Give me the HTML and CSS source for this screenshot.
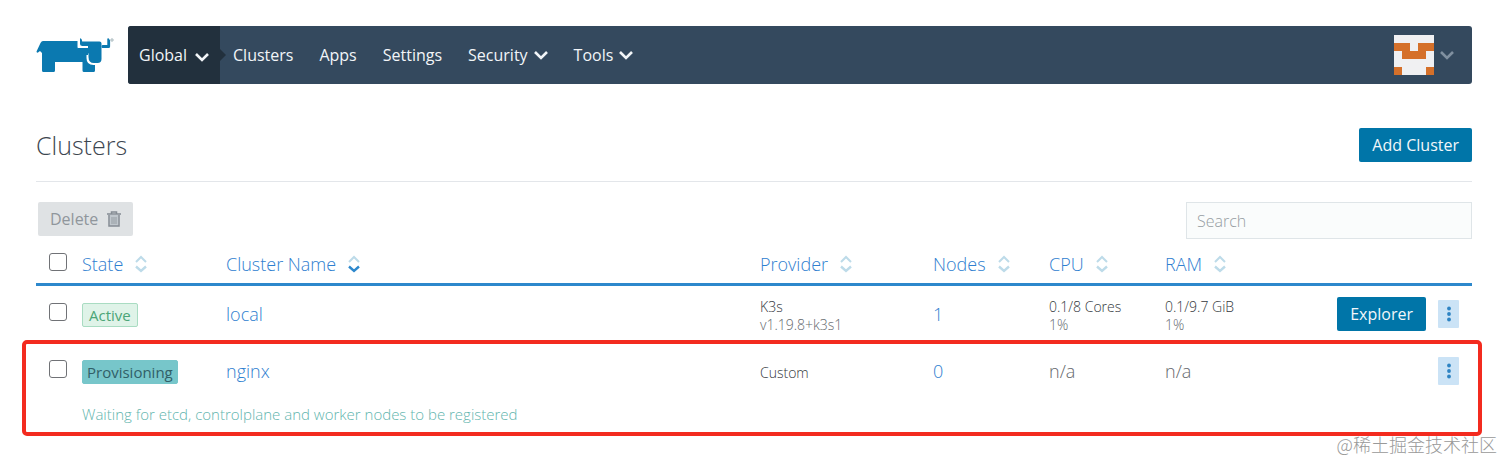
FILE: index.html
```html
<!DOCTYPE html>
<html lang="en">
<head>
  <meta charset="UTF-8">
  <meta name="viewport" content="width=device-width, initial-scale=1.0">
  <title>Clusters</title>
  <link rel="stylesheet" href="styles.css">
</head>
<body>

<svg class="sprite" aria-hidden="true">
  <symbol id="chevron" viewBox="0 0 14 10">
    <path d="M1 2L7 8 13 2" fill="none" stroke="currentColor" stroke-width="2.600"/>
  </symbol>
  <symbol id="sort" viewBox="0 0 12 18">
    <path d="M1 7l5-5 5 5" fill="none" stroke="#bddbe9" stroke-width="2"/>
    <path d="M1 11.500l5 4.500 5-4.500" fill="none" stroke="currentColor" stroke-width="2.400"/>
  </symbol>
  <symbol id="dots" viewBox="0 0 4 16">
    <circle cx="2" cy="2.500" r="1.900"/>
    <circle cx="2" cy="8" r="1.900"/>
    <circle cx="2" cy="13.500" r="1.900"/>
  </symbol>
</svg>

<header class="header">
  <a href="#" class="logo" aria-label="Home">
    <svg viewBox="0 0 78 36" width="78" height="36">
      <g fill="#0b79b0">
        <path d="M7 3h34.500v6q0 1.500 1.500 1.500h8q1 0 1-1V8h-5.500q-2.500 0-2.500-2V1q0-1 .8-.6.7.2.9 1.200l.5 1.900h17.300q2 0 2 2v15.500q0 4-4 4H58q-5.500 0-5.500-6v-3q0-1-1-1t-1 1v4q0 7 7 7h1.500v5.500q0 1.500-1.500 1.500H48q-1.500 0-1.500-1.500V24H19v8.500q0 1.500-1.500 1.500h-10Q6 34 6 32.500V15l-2-2-2 1.500q-1.500.5-1.500-1L4.500 5Q5.500 3 7 3z"/>
        <path d="M42 10h10v7H42z"/>
        <path d="M66.500 7h4.800V.8q.4-1 1.500-.3l1.300 1.900v6q0 1.600-1.500 1.600h-6.100q-1 0-1-1.500t1-1.500z"/>
      </g>
      <path d="M43 2v6q0 1.200 1.200 1.200H52" fill="none" stroke="#fff" stroke-width="1.600"/>
      <circle cx="76" cy="2" r="1.200" fill="none" stroke="#7f979d" stroke-width="0.700"/>
    </svg>
  </a>
  <nav class="nav">
    <button type="button" class="nav-item scope">Global <svg class="chevron"><use href="#chevron"/></svg></button>
    <a href="#" class="nav-item">Clusters</a>
    <a href="#" class="nav-item">Apps</a>
    <a href="#" class="nav-item">Settings</a>
    <button type="button" class="nav-item">Security <svg class="chevron"><use href="#chevron"/></svg></button>
    <button type="button" class="nav-item">Tools <svg class="chevron"><use href="#chevron"/></svg></button>
    <button type="button" class="nav-item user" aria-label="User menu">
      <svg class="avatar" viewBox="0 0 40 40" shape-rendering="crispEdges">
        <path fill="#f0f0f2" d="M0 0h40v40H0z"/>
        <path fill="#d5702a" d="M0 8h16v8h8V8h16v8h-8v8H8v-8H0zM0 32h8v8H0zM32 32h8v8h-8z"/>
      </svg>
      <svg class="chevron"><use href="#chevron"/></svg>
    </button>
  </nav>
</header>

<main class="content">
  <div class="title-bar">
    <h1>Clusters</h1>
    <button type="button" class="btn">Add Cluster</button>
  </div>

  <div class="toolbar">
    <button type="button" class="btn btn-delete" disabled>Delete
      <svg viewBox="0 0 14 16" width="14" height="16">
        <path fill="#c0c7cd" d="M2.500 4h9v11h-9z"/>
        <path d="M0 3h14M4.500 3V1h5v2M2 4v11h10V4" fill="none" stroke="#858c94" stroke-width="1.500"/>
        <path d="M5 6v7M7 6v7M9 6v7" fill="none" stroke="#858c94" stroke-width="0.700"/>
      </svg>
    </button>
    <input type="search" class="search" placeholder="Search" aria-label="Search">
  </div>

  <table class="clusters">
    <colgroup>
      <col class="col-check">
      <col class="col-state">
      <col class="col-name">
      <col class="col-provider">
      <col class="col-nodes">
      <col class="col-cpu">
      <col class="col-ram">
      <col class="col-actions">
    </colgroup>
    <thead>
      <tr>
        <th class="check"><input type="checkbox" aria-label="Select all"></th>
        <th><a href="#">State <svg class="sort"><use href="#sort"/></svg></a></th>
        <th><a href="#">Cluster Name <svg class="sort sorted"><use href="#sort"/></svg></a></th>
        <th><a href="#">Provider <svg class="sort"><use href="#sort"/></svg></a></th>
        <th><a href="#">Nodes <svg class="sort"><use href="#sort"/></svg></a></th>
        <th><a href="#">CPU <svg class="sort"><use href="#sort"/></svg></a></th>
        <th><a href="#">RAM <svg class="sort"><use href="#sort"/></svg></a></th>
        <th></th>
      </tr>
    </thead>
    <tbody>
      <tr class="row">
        <td class="check"><input type="checkbox" aria-label="Select local"></td>
        <td><span class="badge active">Active</span></td>
        <td><a href="#">local</a></td>
        <td class="small">K3s<div class="muted">v1.19.8+k3s1</div></td>
        <td><a href="#">1</a></td>
        <td class="small">0.1/8 Cores<div class="muted">1%</div></td>
        <td class="small">0.1/9.7 GiB<div class="muted">1%</div></td>
        <td>
          <div class="actions">
            <button type="button" class="btn">Explorer</button>
            <button type="button" class="more" aria-label="Actions for local"><svg><use href="#dots"/></svg></button>
          </div>
        </td>
      </tr>
    </tbody>
    <tbody class="highlight">
      <tr class="row">
        <td class="check"><input type="checkbox" aria-label="Select nginx"></td>
        <td><span class="badge provisioning">Provisioning</span></td>
        <td><a href="#">nginx</a></td>
        <td class="small">Custom</td>
        <td><a href="#">0</a></td>
        <td class="muted">n/a</td>
        <td class="muted">n/a</td>
        <td>
          <div class="actions">
            <button type="button" class="more" aria-label="Actions for nginx"><svg><use href="#dots"/></svg></button>
          </div>
        </td>
      </tr>
      <tr class="message">
        <td></td>
        <td colspan="7">Waiting for etcd, controlplane and worker nodes to be registered</td>
      </tr>
    </tbody>
  </table>
</main>

<div class="watermark" lang="zh-CN">@稀土掘金技术社区</div>

</body>
</html>
```
FILE: styles.css
```css
* {
  box-sizing: border-box;
}

body {
  position: relative;
  margin: 0;
  padding: 26px 40px 32px 36px;
  min-height: 100vh;
  background-color: #fff;
  color: #33373c;
  font-family: "Open Sans", "Noto Sans", sans-serif;
  font-size: 16px;
  font-weight: 300;
}

a {
  color: #2f80d0;
  text-decoration: none;
}

button,
input {
  font-family: inherit;
  font-weight: inherit;
}

.sprite {
  position: absolute;
  width: 0;
  height: 0;
}

/* Header */
.header {
  display: flex;
  height: 58px;
}

.logo {
  width: 92px;
  padding-top: 12px;
}

.nav {
  flex: 1;
  display: flex;
  background-color: #34495e;
  border-radius: 3px;
}

.nav-item {
  display: flex;
  align-items: center;
  gap: 6px;
  padding: 0 13px;
  border: none;
  background: none;
  color: #f2f5f8;
  font-size: 16px;
  font-weight: 400;
  cursor: pointer;
}

.chevron {
  width: 14px;
  height: 10px;
}

.scope {
  position: relative;
  gap: 8px;
  padding: 0 11px;
  background-color: #22303d;
  border-radius: 3px 0 0 3px;
}

.scope .chevron {
  margin-top: 4px;
}

.scope::after {
  content: "";
  position: absolute;
  left: 100%;
  top: 23px;
  border: 6px solid transparent;
  border-left-color: #22303d;
  border-right: none;
}

.user {
  margin-left: auto;
  padding: 0 18px;
}

.user .chevron {
  color: #8090a0;
}

.avatar {
  width: 40px;
  height: 40px;
}

/* Title */
.title-bar {
  display: flex;
  justify-content: space-between;
  align-items: center;
  padding: 44px 0 19px;
  border-bottom: 1px solid #e3e6ea;
}

h1 {
  margin: 0;
  color: #3d4650;
  font-size: 25px;
  font-weight: 300;
  line-height: 34px;
}

.btn {
  height: 34px;
  padding: 0 13px;
  border: none;
  border-radius: 2px;
  background-color: #0075a8;
  color: #f2f7fa;
  font-size: 16px;
  font-weight: 400;
  cursor: pointer;
}

/* Toolbar */
.toolbar {
  display: flex;
  justify-content: space-between;
  align-items: flex-start;
  padding: 20px 0 6px 2px;
}

.btn-delete {
  display: flex;
  align-items: center;
  gap: 9px;
  padding: 0 12px;
  background-color: #dfe2e4;
  color: #90969c;
  cursor: default;
}

.search {
  width: 286px;
  height: 37px;
  padding: 0 10px;
  border: 1px solid #dfe5e8;
  background-color: #fafcfc;
  font-size: 16px;
  outline: none;
}

.search::placeholder {
  color: #969ca2;
}

/* Table */
.clusters {
  width: 100%;
  table-layout: fixed;
  border-collapse: collapse;
}

.col-check { width: 46px; }
.col-state { width: 144px; }
.col-provider { width: 173px; }
.col-nodes { width: 116px; }
.col-cpu { width: 116px; }
.col-ram { width: 172px; }
.col-actions { width: 135px; }

th,
td {
  padding: 0;
  text-align: left;
  white-space: nowrap;
}

th {
  height: 39px;
  border-bottom: 3px solid #2d88cc;
  font-size: 18px;
  font-weight: 300;
}

th a {
  display: flex;
  align-items: center;
  gap: 12px;
}

.sort {
  width: 12px;
  height: 18px;
  color: #bddbe9;
}

.sorted {
  color: #2d88cc;
}

.check {
  padding-left: 13px;
}

.check input {
  display: block;
  width: 18px;
  height: 18px;
  margin: 0 0 4px;
  appearance: none;
  border: 1px solid #707276;
  border-radius: 3px;
  background-color: #fff;
}

.row {
  height: 58px;
  font-size: 18px;
}

.row .small {
  padding-top: 4px;
  font-size: 14px;
  line-height: 18px;
}

.row div.muted,
td.muted {
  color: #64686c;
}

.badge {
  display: inline-block;
  padding: 0 6px;
  border: 1px solid #a9dcc2;
  border-radius: 2px;
  font-size: 15px;
  font-weight: 400;
  line-height: 22px;
  vertical-align: middle;
}

.active {
  background-color: #dff3e8;
  color: #4ba577;
}

.provisioning {
  padding: 0 4px;
  border-color: #77c6ca;
  background-color: #77c6ca;
  color: #315f68;
}

.actions {
  display: flex;
  justify-content: flex-end;
  align-items: center;
  gap: 12px;
  padding-right: 13px;
}

.more {
  display: flex;
  justify-content: center;
  align-items: center;
  flex-shrink: 0;
  width: 21px;
  height: 28px;
  padding: 0;
  border: none;
  border-radius: 1px;
  background-color: #cbe3f6;
  cursor: pointer;
}

.more svg {
  width: 4px;
  height: 16px;
  fill: #2d83c3;
}

.message td {
  height: 27px;
  color: #5fb5ae;
  font-size: 15px;
}

/* Red frame round the cluster being provisioned */
.highlight {
  position: relative;
}

.highlight::after {
  content: "";
  position: absolute;
  inset: -2px -10px -9px -14px;
  border: 4px solid #f32b1f;
  border-radius: 5px;
  pointer-events: none;
}

.watermark {
  position: absolute;
  right: 15px;
  bottom: 12px;
  color: #999;
  font-family: "Noto Sans CJK SC", sans-serif;
  font-size: 18px;
  line-height: 28px;
}
```
